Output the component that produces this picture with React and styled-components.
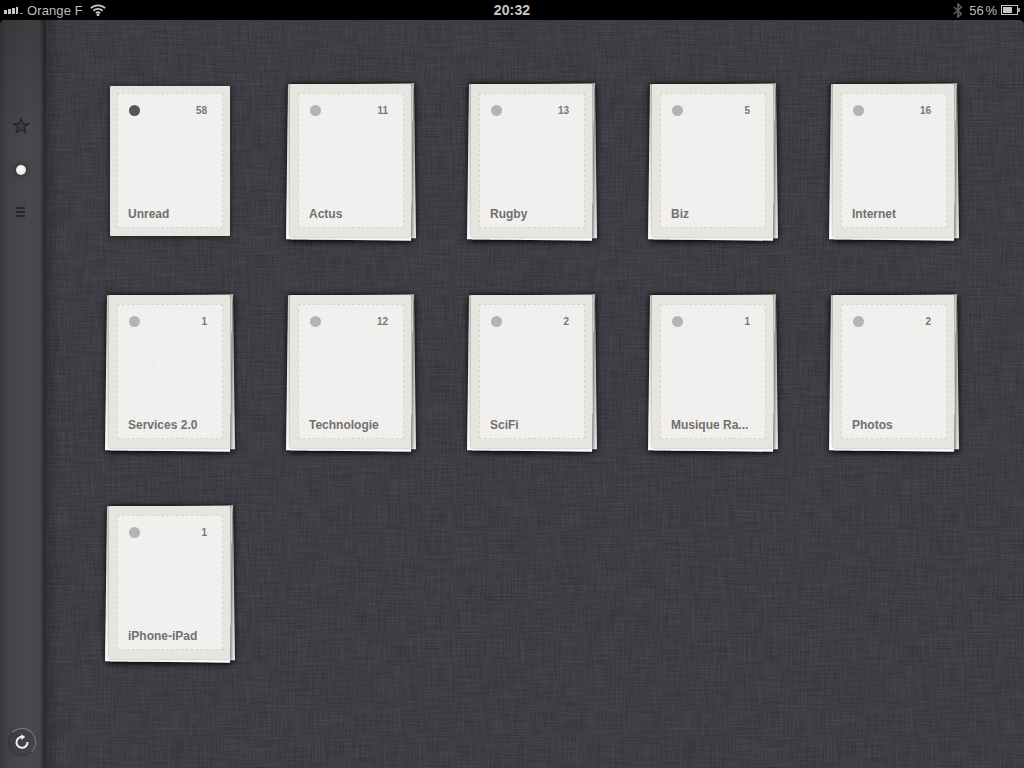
import React from 'react';
import styled, { createGlobalStyle, css } from 'styled-components';

const noise = (freq, seed, matrix) =>
  `<filter id="f${seed}" x="0" y="0" width="100%" height="100%"><feTurbulence type="fractalNoise" baseFrequency="${freq}" numOctaves="2" seed="${seed}" stitchTiles="stitch"/><feColorMatrix values="${matrix}"/></filter><rect width="512" height="512" filter="url(#f${seed})"/>`;

const svgTile = body =>
  `url("data:image/svg+xml,${encodeURIComponent(
    `<svg xmlns="http://www.w3.org/2000/svg" width="512" height="512">${body}</svg>`
  )}")`;

// linen threads for the cover, fine specks for the paper
const linen = svgTile(
  noise('0.9 0.04', 3, '0 0 0 0 0 0 0 0 0 0 0 0 0 0 0 0.24 0 0 0 -0.06') +
  noise('0.04 0.9', 5, '0 0 0 0 0 0 0 0 0 0 0 0 0 0 0 0.24 0 0 0 -0.06') +
  noise('0.8 0.03', 8, '0 0 0 0 1 0 0 0 0 1 0 0 0 0 1 0.08 0 0 0 -0.028') +
  noise('0.03 0.8', 9, '0 0 0 0 1 0 0 0 0 1 0 0 0 0 1 0.08 0 0 0 -0.028')
);

const specks = svgTile(
  noise('0.5', 12, '0 0 0 0 0.76 0 0 0 0 0.74 0 0 0 0 0.7 8 0 0 0 -5.5')
);

const GlobalStyle = createGlobalStyle`
  html, body {
    margin: 0;
    padding: 0;
    background: #000;
    font-family: 'Liberation Sans', Arial, sans-serif;
  }
`;

const Screen = styled.div`
  width: 1024px;
  height: 768px;
  display: flex;
  flex-direction: column;
  overflow: hidden;
  background: #000;
`;

const StatusBar = styled.div`
  height: 20px;
  flex: none;
  display: grid;
  grid-template-columns: 1fr auto 1fr;
  align-items: center;
  padding: 0 4px 0 4px;
  color: #bdbdbd;
  font-size: 13px;
`;

const StatusSide = styled.div`
  display: flex;
  align-items: center;
  justify-content: ${props => (props.$right ? 'flex-end' : 'flex-start')};
  gap: 4px;
`;

const Carrier = styled.span`
  letter-spacing: 0.1px;
`;

const Clock = styled.div`
  font-size: 14px;
  font-weight: 700;
  color: #c8c8c8;
  letter-spacing: 0.1px;
`;

const Percent = styled.span`
  font-size: 13px;
  word-spacing: -2px;
  margin-left: 2px;
`;

const Book = styled.div`
  flex: 1;
  display: flex;
  min-height: 0;
  border-radius: 5px 5px 0 0;
  overflow: hidden;
  background-color: #3f4147;
`;

const Sidebar = styled.aside`
  width: 46px;
  flex: none;
  display: flex;
  flex-direction: column;
  align-items: center;
  padding: 94px 4px 12px 0;
  box-sizing: border-box;
  background:
    linear-gradient(180deg, rgba(0, 0, 0, 0.16) 0, rgba(0, 0, 0, 0) 120px),
    linear-gradient(90deg, #39393d 0, #414245 6px, #48494c 28px, #454649 40px, #333438 43px, #28292d 45px, #2e2f34 46px);
`;

const SideButton = styled.div`
  width: 22px;
  height: 22px;
  display: flex;
  align-items: center;
  justify-content: center;
  margin-bottom: ${props => props.$gap || 0}px;
`;

const Knob = styled.div`
  width: 10px;
  height: 10px;
  border-radius: 50%;
  background: radial-gradient(circle at 50% 40%, #fff 0, #eee 55%, #c4c4c4 100%);
  box-shadow: 0 0 6px rgba(0, 0, 0, 0.5);
`;

const RefreshRing = styled.div`
  margin-top: auto;
  margin-left: 1px;
  width: 26px;
  height: 26px;
  display: flex;
  align-items: center;
  justify-content: center;
  border-radius: 50%;
  border: 1px solid rgba(0, 0, 0, 0.18);
  border-top-color: rgba(255, 255, 255, 0.32);
  border-right-color: rgba(255, 255, 255, 0.28);
  background: rgba(0, 0, 0, 0.08);
`;

const Shelf = styled.main`
  flex: 1;
  padding: 66px 0 0 64px;
  display: grid;
  grid-template-columns: repeat(5, 120px);
  grid-auto-rows: 150px;
  column-gap: 61px;
  row-gap: 61px;
  align-content: start;
  background-image:
    linear-gradient(90deg, rgba(0, 0, 0, 0.2) 0, rgba(0, 0, 0, 0) 14px),
    ${linen};
`;

const Card = styled.div`
  position: relative;

  ${props => props.$stacked && css`
    &::before,
    &::after {
      content: '';
      position: absolute;
      background: linear-gradient(180deg, #d2d1cc 0, #ebebe8 55%, #ffffff 100%);
      box-shadow: 0 1px 6px rgba(0, 0, 0, 0.8);
    }
    &::before {
      inset: -2px -4px -3px -1px;
      transform: rotate(-0.7deg);
    }
    &::after {
      inset: -1px -1px -4px -4px;
      transform: rotate(0.7deg);
    }
  `}
`;

const Sheet = styled.div`
  position: absolute;
  z-index: 1;
  box-sizing: border-box;
  background: #e7e5e0;
  border-radius: 1px;
  ${props => (props.$stacked
    ? css`
      inset: -2px 0 -1px -1px;
      padding: 9px 7px 9px 8px;
      box-shadow: 0 0 3px rgba(0, 0, 0, 0.4);
    `
    : css`
      inset: 0;
      padding: 7px 7px 8px 7px;
      box-shadow: 0 1px 6px rgba(0, 0, 0, 0.6);
    `)}
`;

const Paper = styled.div`
  height: 100%;
  box-sizing: border-box;
  border: 1px dashed #d6d4ce;
  padding: 11px 15px 6px 11px;
  display: flex;
  flex-direction: column;
  background-color: #f1f0ee;
  background-image: ${specks};
`;

const CardTop = styled.div`
  display: flex;
  align-items: center;
  justify-content: space-between;
`;

const Dot = styled.span`
  width: 11px;
  height: 11px;
  border-radius: 50%;
  background: ${props => (props.$active ? '#555555' : '#b4b4b2')};
`;

const Count = styled.span`
  font-size: 10px;
  font-weight: 700;
  line-height: 11px;
  color: #777;
`;

const Name = styled.div`
  margin-top: auto;
  margin-left: -1px;
  font-size: 12px;
  font-weight: 700;
  line-height: 14px;
  color: #707070;
  white-space: nowrap;
`;

const feeds = [
  { name: 'Unread', count: 58, active: true },
  { name: 'Actus', count: 11 },
  { name: 'Rugby', count: 13 },
  { name: 'Biz', count: 5 },
  { name: 'Internet', count: 16 },
  { name: 'Services 2.0', count: 1 },
  { name: 'Technologie', count: 12 },
  { name: 'SciFi', count: 2 },
  { name: 'Musique Ra...', count: 1 },
  { name: 'Photos', count: 2 },
  { name: 'iPhone-iPad', count: 1 }
];

const Signal = () => (
  <svg width="19" height="7" viewBox="0 0 19 7">
    <rect x="0" y="3" width="3" height="4" fill="#c4c4c4" />
    <rect x="4" y="2" width="3" height="5" fill="#c4c4c4" />
    <rect x="8" y="1" width="3" height="6" fill="#c4c4c4" />
    <rect x="12" y="0" width="2" height="7" fill="#c4c4c4" />
    <rect x="16" y="6" width="3" height="1" fill="#8a8a8a" />
  </svg>
);

const Wifi = () => (
  <svg width="16" height="12" viewBox="0 0 16 12" fill="none" stroke="#c4c4c4" strokeWidth="1.7" style={{ marginLeft: 3 }}>
    <path d="M.8 4.2a10.4 10.4 0 0 1 14.4 0" />
    <path d="M3.3 6.8a6.8 6.8 0 0 1 9.4 0" />
    <path d="M5.8 9.2a3.2 3.2 0 0 1 4.4 0" />
    <circle cx="8" cy="10.8" r=".6" fill="#c4c4c4" />
  </svg>
);

const Bluetooth = () => (
  <svg width="10" height="15" viewBox="0 0 10 15" fill="none" stroke="#5c5c5c" strokeWidth="1.7">
    <path d="M1 4l7.3 6.8L5 14V1l3.3 3.2L1 11" />
  </svg>
);

const Battery = () => (
  <svg width="19" height="10" viewBox="0 0 19 10">
    <rect x=".5" y=".5" width="16" height="9" fill="none" stroke="#c4c4c4" />
    <rect x="2" y="2" width="9" height="6" fill="#c4c4c4" />
    <rect x="17" y="3" width="2" height="4" fill="#9a9a9a" />
  </svg>
);

const Star = () => (
  <svg width="18" height="17" viewBox="0 0 18 17" fill="rgba(0,0,0,.12)" stroke="#232427" strokeWidth="1.2">
    <path d="M9 1.5l2 5.3h5.7l-4.6 3.4 1.7 5.4L9 12.4l-4.8 3.2 1.7-5.4L1.3 6.8H7z" />
  </svg>
);

const ListIcon = () => (
  <svg width="10" height="10" viewBox="0 0 10 10">
    <rect y="0" width="9" height="2" fill="#26272a" />
    <rect y="4" width="9" height="2" fill="#26272a" />
    <rect y="8" width="9" height="2" fill="#26272a" />
  </svg>
);

const Refresh = () => (
  <svg width="16" height="16" viewBox="0 0 16 16" fill="none" stroke="#f2f2f2" strokeWidth="2">
    <path d="M9.8 3.1A5.5 5.5 0 1 0 13.5 8" />
    <path d="M7.3 0.3 11.2 3 7.3 6.1z" fill="#f2f2f2" stroke="none" />
  </svg>
);

const App = () => (
  <Screen>
    <GlobalStyle />
    <StatusBar>
      <StatusSide>
        <Signal />
        <Carrier>Orange F</Carrier>
        <Wifi />
      </StatusSide>
      <Clock>20:32</Clock>
      <StatusSide $right>
        <Bluetooth />
        <Percent>56 %</Percent>
        <Battery />
      </StatusSide>
    </StatusBar>
    <Book>
      <Sidebar>
        <SideButton $gap={23}><Star /></SideButton>
        <SideButton $gap={20}><Knob /></SideButton>
        <SideButton><ListIcon /></SideButton>
        <RefreshRing><Refresh /></RefreshRing>
      </Sidebar>
      <Shelf>
        {feeds.map(feed => (
          <Card key={feed.name} $stacked={!feed.active}>
            <Sheet $stacked={!feed.active}>
              <Paper>
                <CardTop>
                  <Dot $active={feed.active} />
                  <Count>{feed.count}</Count>
                </CardTop>
                <Name>{feed.name}</Name>
              </Paper>
            </Sheet>
          </Card>
        ))}
      </Shelf>
    </Book>
  </Screen>
);

export default App;
